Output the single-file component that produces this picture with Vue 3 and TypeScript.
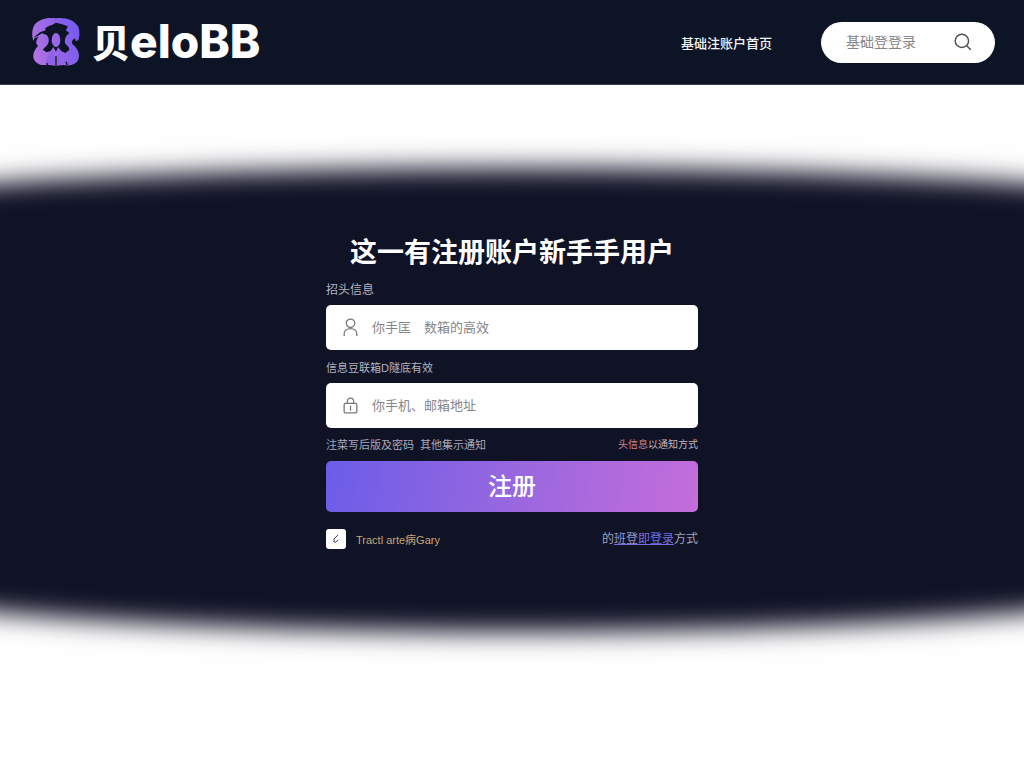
<script setup lang="ts">
import { ref } from 'vue'

const query = ref('')
const account = ref('')
const contact = ref('')
const agreed = ref(true)
</script>

<template>
  <div class="page">
    <header class="topbar">
      <a class="brand" href="#">
        <svg class="mark" viewBox="6 8 144 150" aria-hidden="true">
          <defs>
            <linearGradient id="markFill" x1="0" y1="0.6" x2="1" y2="0.3">
              <stop offset="0" stop-color="#b272e2" />
              <stop offset="1" stop-color="#7459ee" />
            </linearGradient>
          </defs>
          <path
            fill="url(#markFill)"
            d="M10 80C4 62 6 40 16 28C30 14 55 8 78 12C105 8 132 16 144 36C150 48 149 66 145 78L137 80L135 72C128 76 122 82 128 90C142 102 150 116 146 132C142 150 122 156 100 152C88 154 66 154 52 151C32 156 14 146 10 130C8 114 16 104 24 94C16 88 18 76 26 68L14 70Z"
          />
          <path
            fill="#0d1425"
            d="M58 34C66 33 72 28 78 25C90 29 104 29 114 37L107 47L118 56C106 66 102 76 106 88C112 94 118 98 118 106L106 116L94 110L84 98L78 112L70 98L62 110L50 114L38 106L46 98C58 88 60 74 50 62L36 57L22 66L12 68L30 54L47 48L46 41Z"
          />
          <ellipse cx="78" cy="77" rx="13" ry="21" fill="#9a67e6" />
          <path
            fill="#8f63e7"
            d="M48 149C50 128 60 112 68 110C76 122 76 140 72 151ZM84 151C82 134 84 118 90 110C100 116 108 134 108 150Z"
          />
          <path fill="none" stroke="#0d1425" stroke-width="4" d="M78 152L78 126M50 146L54 156M108 142L112 152" />
        </svg>
        <span class="name"><span class="han">贝</span>eloBB</span>
      </a>
      <nav class="nav">
        <a href="#">基础注账户首页</a>
      </nav>
      <form class="search" role="search" @submit.prevent>
        <input v-model="query" type="text" placeholder="基础登登录" aria-label="基础登登录" />
        <button type="submit" aria-label="基础登登录">
          <svg viewBox="0 0 18 18" aria-hidden="true">
            <circle cx="8" cy="8" r="6" />
            <path d="M12.5 12.5L16 16" />
          </svg>
        </button>
      </form>
    </header>

    <main class="stage">
      <form class="signup" @submit.prevent>
        <h1>这一有注册账户新手手用户</h1>

        <label class="caption first" for="account">招头信息</label>
        <div class="field">
          <svg viewBox="0 0 16 18" aria-hidden="true">
            <circle cx="8" cy="5" r="4" />
            <path d="M2 17V15C2 12 4.500 10 8 10S14 12 14 15V17" />
          </svg>
          <input id="account" v-model="account" type="text" placeholder="你手匡　数箱的高效" />
        </div>

        <label class="caption second" for="contact">信息豆联箱D隧底有效</label>
        <div class="field">
          <svg viewBox="0 0 16 18" aria-hidden="true">
            <rect x="2" y="7" width="12" height="9" rx="1" />
            <path d="M5 7V5C5 1 11 1 11 5V7M8 9V14" />
          </svg>
          <input id="contact" v-model="contact" type="text" placeholder="你手机、邮箱地址" />
        </div>

        <div class="notes">
          <p><span>注菜写后版及密码</span><span>其他集示通知</span></p>
          <a href="#"><span class="warm">头信息</span>以通知方式</a>
        </div>

        <button class="submit" type="submit">注册</button>

        <div class="footer">
          <label class="agree">
            <span class="box">
              <input v-model="agreed" type="checkbox" />
              <svg v-if="agreed" viewBox="0 0 10 10" aria-hidden="true">
                <path d="M7 1L3 5V8H5L7 6" />
              </svg>
            </span>
            <span class="terms">Tractl arte病Gary</span>
          </label>
          <p class="login">的<a href="#"><span>班登</span>即登录</a>方式</p>
        </div>
      </form>
    </main>
  </div>
</template>

<style>
body {
  margin: 0;
  background: #fefefe;
}
</style>

<style scoped>
.page {
  min-height: 100vh;
  overflow: hidden;
  font-family: "Liberation Sans", "Noto Sans CJK SC", sans-serif;
}

.topbar {
  display: flex;
  align-items: center;
  box-sizing: border-box;
  height: 85px;
  padding: 0 29px 0 32px;
  background: #0d1425;
  border-bottom: 1px solid #3b4050;
}

.brand {
  display: flex;
  align-items: center;
  gap: 12px;
  margin-right: auto;
  color: #fff;
  text-decoration: none;
}

.mark {
  width: 48px;
  height: 50px;
}

.name {
  display: flex;
  align-items: center;
  padding-bottom: 3px;
  font: 800 46px/56px Inter, "Noto Sans CJK SC", sans-serif;
}

.han {
  font: 900 38px/56px "Noto Sans CJK SC", sans-serif;
}

.nav a {
  color: #f4f5f8;
  font-size: 13px;
  font-weight: 500;
  text-decoration: none;
}

.search {
  display: flex;
  align-items: center;
  box-sizing: border-box;
  width: 174px;
  height: 41px;
  margin-left: 49px;
  padding: 0 22px 0 25px;
  background: #fff;
  border-radius: 21px;
}

.search input {
  flex: 1;
  min-width: 0;
  padding: 0;
  border: 0;
  outline: 0;
  background: none;
  color: #444;
  font: inherit;
  font-size: 14px;
}

.search button {
  width: 20px;
  height: 20px;
  padding: 0;
  border: 0;
  background: none;
}

svg {
  display: block;
}

.search svg {
  width: 20px;
  height: 20px;
  fill: none;
  stroke: #4d4d55;
  stroke-width: 1.3;
}

.stage {
  position: relative;
  display: flex;
  justify-content: center;
  margin-top: 80px;
  padding: 69px 24px 83px;
}

.stage::before {
  content: "";
  position: absolute;
  inset: 3px -20% 0;
  border-radius: 50% / 50px 50px 65px 65px;
  background: #101226;
  filter: blur(13px);
}

.signup {
  position: relative;
  width: 100%;
  max-width: 372px;
}

h1 {
  margin: 0;
  color: #fff;
  font-size: 27px;
  font-weight: 700;
  line-height: 38px;
  text-align: center;
  white-space: nowrap;
}

.caption {
  display: block;
  color: #b3b4c0;
}

.first {
  padding: 8px 0 5px;
  font-size: 12px;
  line-height: 20px;
}

.second {
  padding: 8px 0 5px;
  font-size: 11px;
  line-height: 20px;
}

.field {
  display: flex;
  align-items: center;
  gap: 13px;
  height: 45px;
  padding: 0 16px;
  background: #fff;
  border-radius: 5px;
}

.field svg {
  width: 17px;
  height: 19px;
  fill: none;
  stroke: #77777d;
  stroke-width: 1.2;
}

.field input {
  flex: 1;
  min-width: 0;
  padding: 0;
  border: 0;
  outline: 0;
  background: none;
  color: #444;
  font: inherit;
  font-size: 13px;
}

input::placeholder {
  color: #85858a;
  opacity: 1;
}

.notes {
  display: flex;
  justify-content: space-between;
  padding: 7px 0 6px;
  font-size: 11px;
  line-height: 20px;
}

p {
  margin: 0;
}

.notes p {
  display: flex;
  gap: 6px;
  color: #a9aab8;
}

.notes a {
  color: #c4b4bd;
  font-size: 10px;
  text-decoration: none;
}

.notes .warm {
  color: #d38487;
}

.submit {
  display: block;
  width: 100%;
  height: 51px;
  padding: 0 0 4px;
  border: 0;
  border-radius: 5px;
  background: linear-gradient(100deg, #6b5de8, #9867df 50%, #c56ddb);
  color: #fff;
  font: inherit;
  font-size: 24px;
  font-weight: 500;
}

.footer {
  display: flex;
  align-items: center;
  justify-content: space-between;
  padding-top: 17px;
}

.agree {
  display: flex;
  align-items: center;
  gap: 10px;
}

.box {
  position: relative;
}

.box input {
  display: block;
  appearance: none;
  width: 20px;
  height: 20px;
  margin: 0;
  background: #fff;
  border-radius: 3px;
}

.box svg {
  position: absolute;
  inset: 5px;
  width: 10px;
  height: 10px;
  fill: none;
  stroke: #44445c;
  pointer-events: none;
}

.terms {
  color: #c5a774;
  font-size: 11px;
}

.login {
  color: #a0a4bc;
  font-size: 12px;
  line-height: 20px;
}

.login a {
  color: #726ee0;
  text-decoration: underline;
}

.login a span {
  color: #9095c8;
}
</style>
